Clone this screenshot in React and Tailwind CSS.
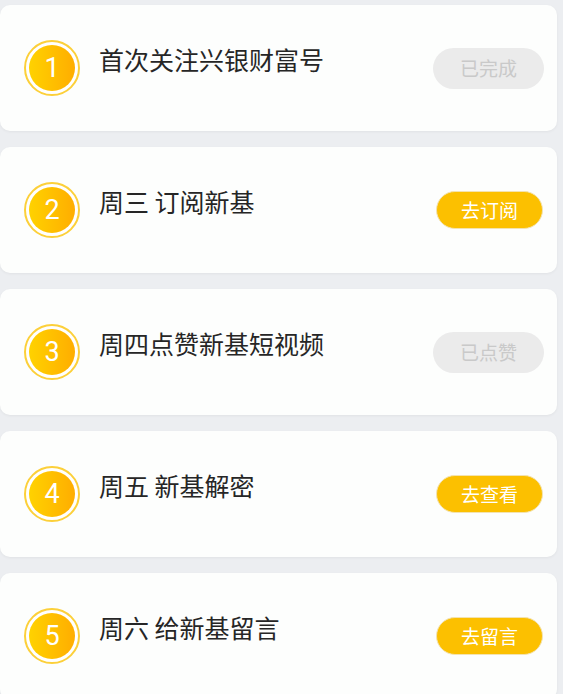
import React from "react";

const items = [
  { n: 1, title: "首次关注兴银财富号", btn: "已完成", done: true },
  { n: 2, title: "周三 订阅新基", btn: "去订阅", done: false },
  { n: 3, title: "周四点赞新基短视频", btn: "已点赞", done: true },
  { n: 4, title: "周五 新基解密", btn: "去查看", done: false },
  { n: 5, title: "周六 给新基留言", btn: "去留言", done: false },
];

function Badge({ n }) {
  return (
    <div className="w-[56px] h-[56px] rounded-full border-[2px] border-[#fcd03a] bg-white flex items-center justify-center shrink-0">
      <div className="w-[46px] h-[46px] rounded-full bg-gradient-to-r from-[#ffd200] to-[#ffad00] flex items-center justify-center text-white text-[27px] leading-none" style={{ fontFamily: "Roboto, 'Noto Sans', sans-serif" }}>
        {n}
      </div>
    </div>
  );
}

export default function App() {
  return (
    <div className="w-[563px] h-[694px] overflow-hidden bg-[#eceef1] pt-[5px] flex flex-col gap-[16px]" style={{ fontFamily: "'Noto Sans CJK SC', 'Noto Sans', sans-serif" }}>
      {items.map((it) => (
        <div key={it.n} className="w-[557px] h-[126px] shrink-0 rounded-[10px] bg-[#fdfefd] shadow-[0_1px_3px_rgba(0,0,0,0.05)] flex items-center pl-[24px] pr-[13px]">
          <Badge n={it.n} />
          <div className="ml-[19px] mb-[17px] text-[25px] leading-none text-[#262626] flex-1">{it.title}</div>
          {it.done ? (
            <div className="w-[111px] h-[41px] rounded-full bg-[#ebebeb] text-[#c9c9c9] text-[19px] flex items-center justify-center">
              {it.btn}
            </div>
          ) : (
            <div className="w-[107px] h-[38px] rounded-full bg-[#fcc000] border border-[#f3e3b0] text-white text-[19px] flex items-center justify-center mr-[1px]">
              {it.btn}
            </div>
          )}
        </div>
      ))}
    </div>
  );
}
